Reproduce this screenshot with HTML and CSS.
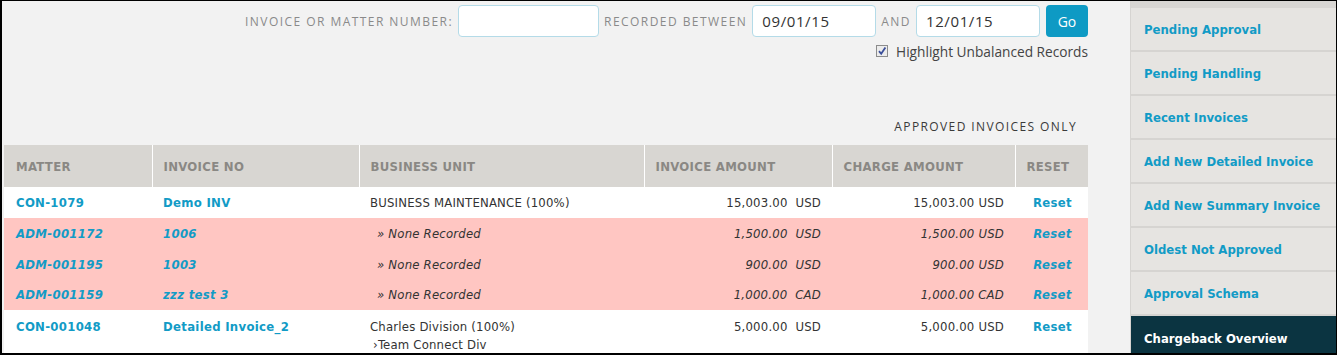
FILE: index.html
```html
<!DOCTYPE html>
<html>
<head>
<meta charset="utf-8">
<link rel="stylesheet" href="styles.css">
</head>
<body>
<div class="frame">
  <div class="main">
    <form class="filters">
      <div class="filter-row">
        <span class="flabel">Invoice or Matter Number:</span>
        <span class="field field-wide"></span>
        <span class="flabel">Recorded Between</span>
        <span class="field field-date">09/01/15</span>
        <span class="flabel">And</span>
        <span class="field field-date">12/01/15</span>
        <span class="go">Go</span>
      </div>
      <div class="check-row">
        <span class="checkbox"><svg width="10" height="10" viewBox="0 0 10 10"><path d="M2 5.2 L4.2 7.8 L8.4 1.6" fill="none" stroke="#3b4f9a" stroke-width="1.8"/></svg></span>
        <span class="check-label">Highlight Unbalanced Records</span>
      </div>
    </form>
    <div class="approved">Approved Invoices Only</div>
    <table class="grid">
      <colgroup>
        <col class="c1"><col class="c2"><col class="c3"><col class="c4"><col class="c5"><col class="c6">
      </colgroup>
      <thead>
        <tr><th>Matter</th><th>Invoice No</th><th>Business Unit</th><th>Invoice Amount</th><th>Charge Amount</th><th>Reset</th></tr>
      </thead>
      <tbody>
        <tr class="r-a">
          <td><a class="lnk">CON-1079</a></td>
          <td><a class="lnk">Demo INV</a></td>
          <td>BUSINESS MAINTENANCE (100%)</td>
          <td class="num">15,003.00&nbsp;&nbsp;USD</td>
          <td class="num">15,003.00 USD</td>
          <td class="ctr"><a class="lnk">Reset</a></td>
        </tr>
        <tr class="bad r-b">
          <td><a class="lnk">ADM-001172</a></td>
          <td><a class="lnk">1006</a></td>
          <td class="none">» None Recorded</td>
          <td class="num">1,500.00&nbsp;&nbsp;USD</td>
          <td class="num">1,500.00 USD</td>
          <td class="ctr"><a class="lnk">Reset</a></td>
        </tr>
        <tr class="bad r-c">
          <td><a class="lnk">ADM-001195</a></td>
          <td><a class="lnk">1003</a></td>
          <td class="none">» None Recorded</td>
          <td class="num">900.00&nbsp;&nbsp;USD</td>
          <td class="num">900.00 USD</td>
          <td class="ctr"><a class="lnk">Reset</a></td>
        </tr>
        <tr class="bad r-b">
          <td><a class="lnk">ADM-001159</a></td>
          <td><a class="lnk">zzz test 3</a></td>
          <td class="none">» None Recorded</td>
          <td class="num">1,000.00&nbsp;&nbsp;CAD</td>
          <td class="num">1,000.00 CAD</td>
          <td class="ctr"><a class="lnk">Reset</a></td>
        </tr>
        <tr class="r-last">
          <td><a class="lnk">CON-001048</a></td>
          <td><a class="lnk">Detailed Invoice_2</a></td>
          <td>Charles Division (100%)<div class="sub">›Team Connect Div</div></td>
          <td class="num">5,000.00&nbsp;&nbsp;USD</td>
          <td class="num">5,000.00 USD</td>
          <td class="ctr"><a class="lnk">Reset</a></td>
        </tr>
      </tbody>
    </table>
  </div>
  <nav class="side">
    <div class="side-top"></div>
    <a class="side-item">Pending Approval</a>
    <a class="side-item">Pending Handling</a>
    <a class="side-item">Recent Invoices</a>
    <a class="side-item">Add New Detailed Invoice</a>
    <a class="side-item">Add New Summary Invoice</a>
    <a class="side-item">Oldest Not Approved</a>
    <a class="side-item">Approval Schema</a>
    <a class="side-item active">Chargeback Overview</a>
  </nav>
</div>
</body>
</html>
```
FILE: styles.css
```css
html, body {
  margin: 0;
  padding: 0;
  background: #f2f2f2;
}
.frame {
  box-sizing: border-box;
  width: 1337px;
  height: 355px;
  overflow: hidden;
  border-top: 1px solid #000;
  border-left: 2px solid #000;
  border-right: 1px solid #000;
  border-bottom: 2px solid #000;
  display: flex;
  background: #f2f2f2;
  font-family: "DejaVu Sans Condensed", "DejaVu Sans", sans-serif;
  font-stretch: condensed;
}
.main {
  width: 1084px;
  padding-left: 2px;
  padding-top: 4px;
  flex: none;
}
.filters {
  margin: 0;
  display: flex;
  flex-direction: column;
  align-items: flex-end;
}
.filter-row {
  display: flex;
  align-items: center;
  gap: 5px;
}
.flabel {
  font-family: "Open Sans", sans-serif;
  font-stretch: normal;
  font-size: 12px;
  letter-spacing: 1.45px;
  text-transform: uppercase;
  color: #8a8a8a;
}
.field {
  box-sizing: border-box;
  height: 32px;
  background: #fff;
  border: 1px solid #b4dbe8;
  border-radius: 4px;
  font-family: "Open Sans", sans-serif;
  font-stretch: normal;
  font-size: 15px;
  letter-spacing: 0.6px;
  color: #333;
  display: flex;
  align-items: center;
  padding-left: 9px;
}
.field-wide { width: 141px; }
.field-date { width: 124px; }
.go {
  box-sizing: border-box;
  width: 42px;
  height: 32px;
  margin-left: 1px;
  background: #0e9ac4;
  border-radius: 4px;
  color: #fff;
  font-family: "Open Sans", sans-serif;
  font-stretch: normal;
  font-size: 14px;
  display: flex;
  align-items: center;
  justify-content: center;
}
.check-row {
  display: flex;
  align-items: center;
  gap: 8px;
  margin-top: 5px;
  height: 18px;
}
.checkbox {
  box-sizing: border-box;
  width: 12px;
  height: 12px;
  border: 1px solid #8c8c8c;
  background: #ececec;
  display: flex;
  align-items: center;
  justify-content: center;
}
.check-label {
  font-family: "Open Sans", sans-serif;
  font-stretch: normal;
  font-size: 13.7px;
  color: #444;
}
.approved {
  margin-top: 58px;
  text-align: right;
  padding-right: 11px;
  font-family: "Open Sans", sans-serif;
  font-stretch: normal;
  font-size: 12px;
  letter-spacing: 1.4px;
  text-transform: uppercase;
  color: #3a3a3a;
  height: 18px;
  line-height: 18px;
}
.grid {
  margin-top: 9px;
  width: 1084px;
  border-collapse: collapse;
  table-layout: fixed;
  font-size: 13px;
  letter-spacing: 0.2px;
  color: #333;
}
.c1 { width: 148px; }
.c2 { width: 207px; }
.c3 { width: 285px; }
.c4 { width: 188px; }
.c5 { width: 183px; }
.c6 { width: 73px; }
.grid th {
  background: #d8d6d2;
  height: 42px;
  padding: 0 0 0 11px;
  text-align: left;
  font-weight: bold;
  font-size: 13px;
  letter-spacing: 0.3px;
  color: #8a8884;
  text-transform: uppercase;
  border-left: 1px solid #fff;
}
.grid th:first-child {
  border-left: none;
  padding-left: 12px;
}
.grid td {
  padding: 0 11px;
  vertical-align: middle;
  white-space: nowrap;
}
.grid td:first-child { padding-left: 12px; }
.r-a td { background: #fff; height: 31px; }
.r-b td { height: 31px; }
.r-c td { height: 30px; }
.bad td {
  background: #ffc6c2;
  font-style: italic;
}
.r-last td {
  background: #fff;
  vertical-align: top;
  padding-top: 8px;
  line-height: 18px;
  height: 40px;
}
.lnk {
  color: #129bc6;
  font-weight: bold;
  font-size: 13px;
  letter-spacing: 0.3px;
  text-decoration: none;
}
.num { text-align: right; }
.ctr { text-align: center; }
.grid td.ctr { padding: 0 0 0 2px; }
.r-last td.ctr { padding-top: 8px; }
.none { padding-left: 18px !important; }
.sub { padding-left: 3px; }
.side {
  margin-left: 42px;
  width: 206px;
  flex: none;
  display: flex;
  flex-direction: column;
  overflow: hidden;
  background: #e6e4e1;
  border-left: 1px solid #d6d4d1;
  box-sizing: border-box;
}
.side-top {
  flex: none;
  height: 7px;
  background: #d8d6d3;
}
.side-item {
  height: 42px;
  flex: none;
  display: flex;
  align-items: center;
  padding-left: 13px;
  border-bottom: 2px solid #d6d4d1;
  color: #129bc6;
  font-weight: bold;
  font-size: 13px;
}
.side-item.active {
  background: #0b3441;
  color: #fff;
  border-bottom: none;
  height: 44px;
}
```
